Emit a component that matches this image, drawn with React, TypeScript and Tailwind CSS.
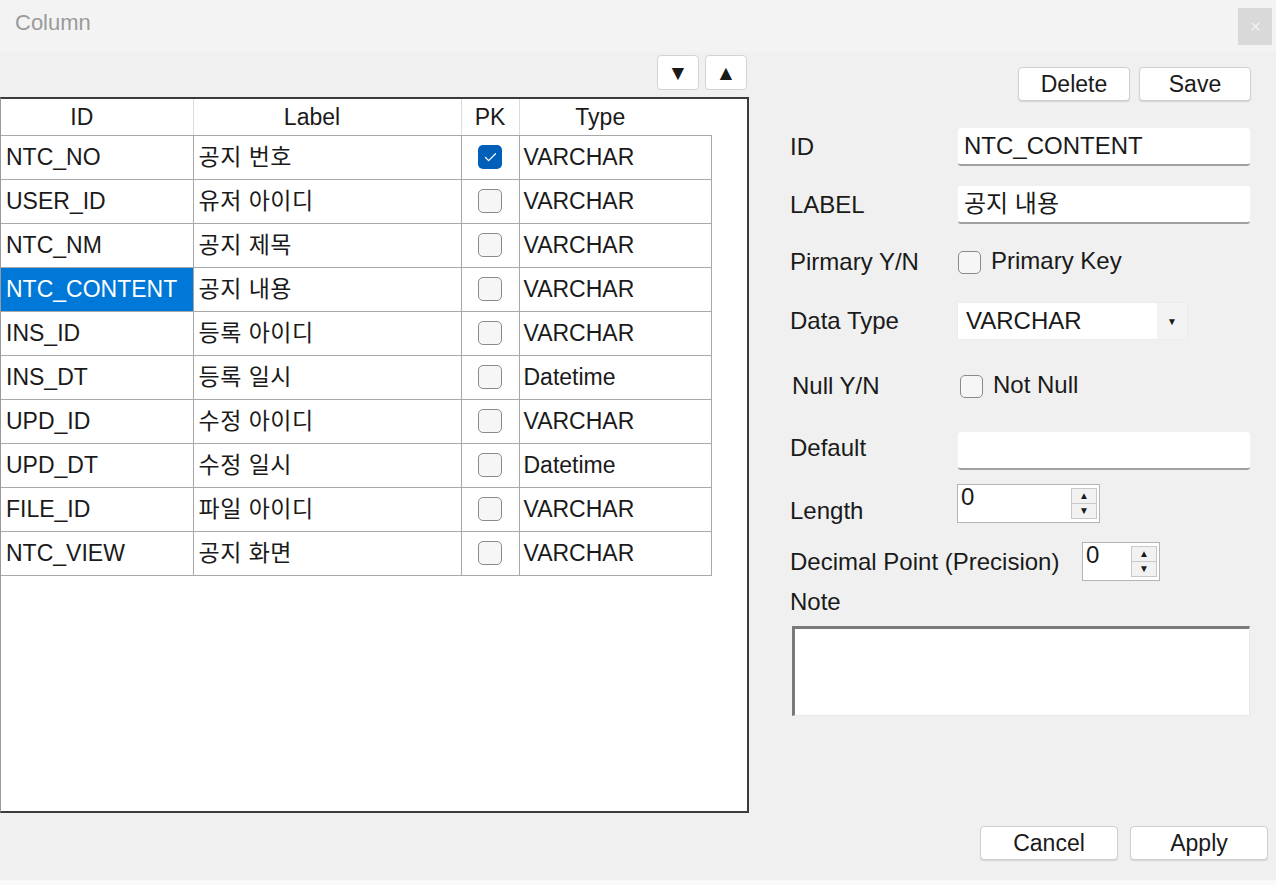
import { Check, X } from "lucide-react"

const rows = [
  { id: "NTC_NO", label: "공지 번호", pk: true, type: "VARCHAR" },
  { id: "USER_ID", label: "유저 아이디", pk: false, type: "VARCHAR" },
  { id: "NTC_NM", label: "공지 제목", pk: false, type: "VARCHAR" },
  { id: "NTC_CONTENT", label: "공지 내용", pk: false, type: "VARCHAR" },
  { id: "INS_ID", label: "등록 아이디", pk: false, type: "VARCHAR" },
  { id: "INS_DT", label: "등록 일시", pk: false, type: "Datetime" },
  { id: "UPD_ID", label: "수정 아이디", pk: false, type: "VARCHAR" },
  { id: "UPD_DT", label: "수정 일시", pk: false, type: "Datetime" },
  { id: "FILE_ID", label: "파일 아이디", pk: false, type: "VARCHAR" },
  { id: "NTC_VIEW", label: "공지 화면", pk: false, type: "VARCHAR" },
]

const font = { fontFamily: '"Liberation Sans", "Noto Sans CJK KR", sans-serif' }

function Box({ checked, size = "w-[24px] h-[24px]" }: { checked?: boolean; size?: string }) {
  if (checked)
    return (
      <div className={`${size} rounded-[5px] bg-[#005fb8] flex items-center justify-center`}>
        <Check className="w-[15px] h-[15px] text-white" strokeWidth={2} />
      </div>
    )
  return <div className={`${size} rounded-[5px] border-[1.5px] border-[#8a8a8a] bg-[#f6f6f6]`} />
}

function Spin({ w }: { w: string }) {
  return (
    <div className={`${w} h-[39px] bg-white border border-[#b4b4b4] flex`}>
      <div className="flex-1 pl-[3px] leading-[24px]">0</div>
      <div className="w-[28px] flex flex-col justify-center py-[3px] pr-[2px]">
        <div className="flex-1 border border-[#c8c8c8] bg-[#f2f2f2] flex items-center justify-center text-[10px] leading-none">▲</div>
        <div className="flex-1 border border-t-0 border-[#c8c8c8] bg-[#f2f2f2] flex items-center justify-center text-[10px] leading-none">▼</div>
      </div>
    </div>
  )
}

const btn =
  "h-[34px] bg-white border border-[#cfcfcf] rounded-[4px] shadow-[0_1px_1px_rgba(0,0,0,0.12)] text-[23px] text-[#1a1a1a] flex items-center justify-center"

export default function App() {
  return (
    <div className="w-[1276px] h-[885px] bg-[#f0f0f0] text-[#1a1a1a] text-[24px] overflow-hidden" style={font}>
      {/* Title bar */}
      <div className="h-[52px] bg-[#f3f3f3] flex items-start justify-between">
        <div className="pl-[15px] pt-[6px] text-[22px] text-[#9a9a9a]">Column</div>
        <div className="mt-[8px] mr-[4px] w-[34px] h-[37px] bg-[#d9d9d9] flex items-center justify-center">
          <X className="w-[13px] h-[13px] text-[#f4f4f4]" strokeWidth={2.5} />
        </div>
      </div>

      <div className="h-[828px] flex">
        {/* Left: grid */}
        <div className="w-[750px] flex flex-col">
          <div className="h-[38px] pt-[3px] pr-[3px] flex justify-end gap-[6px]">
            <div className="w-[42px] h-[35px] bg-white border border-[#d4d4d4] rounded-[4px] flex items-center justify-center text-[21px]">▼</div>
            <div className="w-[42px] h-[35px] bg-white border border-[#d4d4d4] rounded-[4px] flex items-center justify-center text-[21px]">▲</div>
          </div>
          <div className="mt-[7px] h-[716px] w-[749px] bg-white border-2 border-[#3c3c3c] border-l-[#9a9a9a] border-l text-[23px]">
            <table className="border-collapse table-fixed w-[710px]">
              <colgroup>
                <col className="w-[192px]" />
                <col className="w-[268px]" />
                <col className="w-[58px]" />
                <col className="w-[192px]" />
              </colgroup>
              <thead>
                <tr className="h-[36px]">
                  {["ID", "Label", "PK", "Type"].map((h, i) => (
                    <th
                      key={h}
                      className={`font-normal text-center border-b border-[#a8a8a8] ${i < 3 ? "border-r border-r-[#dcdcdc]" : ""} ${i === 2 ? "" : "pr-[30px]"}`}
                    >
                      {h}
                    </th>
                  ))}
                </tr>
              </thead>
              <tbody>
                {rows.map((r) => (
                  <tr key={r.id} className="h-[44px]">
                    <td className={`px-[5px] border border-l-0 border-[#a8a8a8] whitespace-nowrap overflow-hidden ${r.id === "NTC_CONTENT" ? "bg-[#0078d7] text-white" : ""}`}>
                      {r.id}
                    </td>
                    <td className="px-[5px] border border-[#a8a8a8] tracking-[0.5px]">{r.label}</td>
                    <td className="border border-[#a8a8a8]">
                      <div className="flex justify-center">
                        <Box checked={r.pk} />
                      </div>
                    </td>
                    <td className="px-[4px] border border-[#a8a8a8]">{r.type}</td>
                  </tr>
                ))}
              </tbody>
            </table>
          </div>
        </div>

        {/* Right: properties */}
        <div className="flex-1 flex flex-col pl-[40px] pr-[26px] pt-[15px]">
          <div className="flex justify-end gap-[9px] -mr-[1px]">
            <div className={`${btn} w-[112px]`}>Delete</div>
            <div className={`${btn} w-[112px]`}>Save</div>
          </div>

          <div className="mt-[27px] h-[38px] flex items-center">
            <div className="w-[168px]">ID</div>
            <div className="flex-1 h-full bg-white border-b-2 border-[#a0a0a0] rounded-[3px] pl-[6px] flex items-center">NTC_CONTENT</div>
          </div>
          <div className="mt-[20px] h-[38px] flex items-center">
            <div className="w-[168px]">LABEL</div>
            <div className="flex-1 h-full bg-white border-b-2 border-[#a0a0a0] rounded-[3px] pl-[6px] flex items-center">공지 내용</div>
          </div>
          <div className="mt-[19px] h-[38px] flex items-center">
            <div className="w-[168px]">Pirmary Y/N</div>
            <Box size="w-[23px] h-[23px]" />
            <div className="ml-[10px] -mt-[2px]">Primary Key</div>
          </div>
          <div className="mt-[21px] h-[38px] flex items-center">
            <div className="w-[167px]">Data Type</div>
            <div className="w-[231px] h-full bg-white border border-[#ececec] flex">
              <div className="flex-1 pl-[8px] flex items-center">VARCHAR</div>
              <div className="w-[30px] bg-[#f3f3f3] flex items-center justify-center text-[10px]">▼</div>
            </div>
          </div>
          <div className="mt-[27px] h-[38px] flex items-center">
            <div className="w-[170px] pl-[2px]">Null Y/N</div>
            <Box size="w-[23px] h-[23px]" />
            <div className="ml-[10px] -mt-[2px]">Not Null</div>
          </div>
          <div className="mt-[27px] h-[38px] flex items-center">
            <div className="w-[168px] -mt-[6px]">Default</div>
            <div className="flex-1 h-full bg-white border-b-2 border-[#a0a0a0] rounded-[3px]" />
          </div>
          <div className="mt-[14px] h-[39px] flex items-center">
            <div className="w-[167px] mt-[14px]">Length</div>
            <Spin w="w-[143px]" />
          </div>
          <div className="mt-[19px] h-[39px] flex items-center">
            <div className="w-[292px]">Decimal Point (Precision)</div>
            <Spin w="w-[78px]" />
          </div>
          <div className="mt-[9px] h-[24px] flex items-center">Note</div>
          <div className="mt-[12px] ml-[2px] h-[90px] bg-white border-t-[3px] border-l-[3px] border-t-[#7a7a7a] border-l-[#7a7a7a] border-r border-b border-r-[#e8e8e8] border-b-[#e8e8e8]" />

          <div className="mt-[110px] flex justify-end gap-[12px] -mr-[18px]">
            <div className={`${btn} w-[138px] h-[32px]`}>Cancel</div>
            <div className={`${btn} w-[138px] h-[32px]`}>Apply</div>
          </div>
        </div>
      </div>
      <div className="h-[5px] bg-[#f9f9f9]" />
    </div>
  )
}
